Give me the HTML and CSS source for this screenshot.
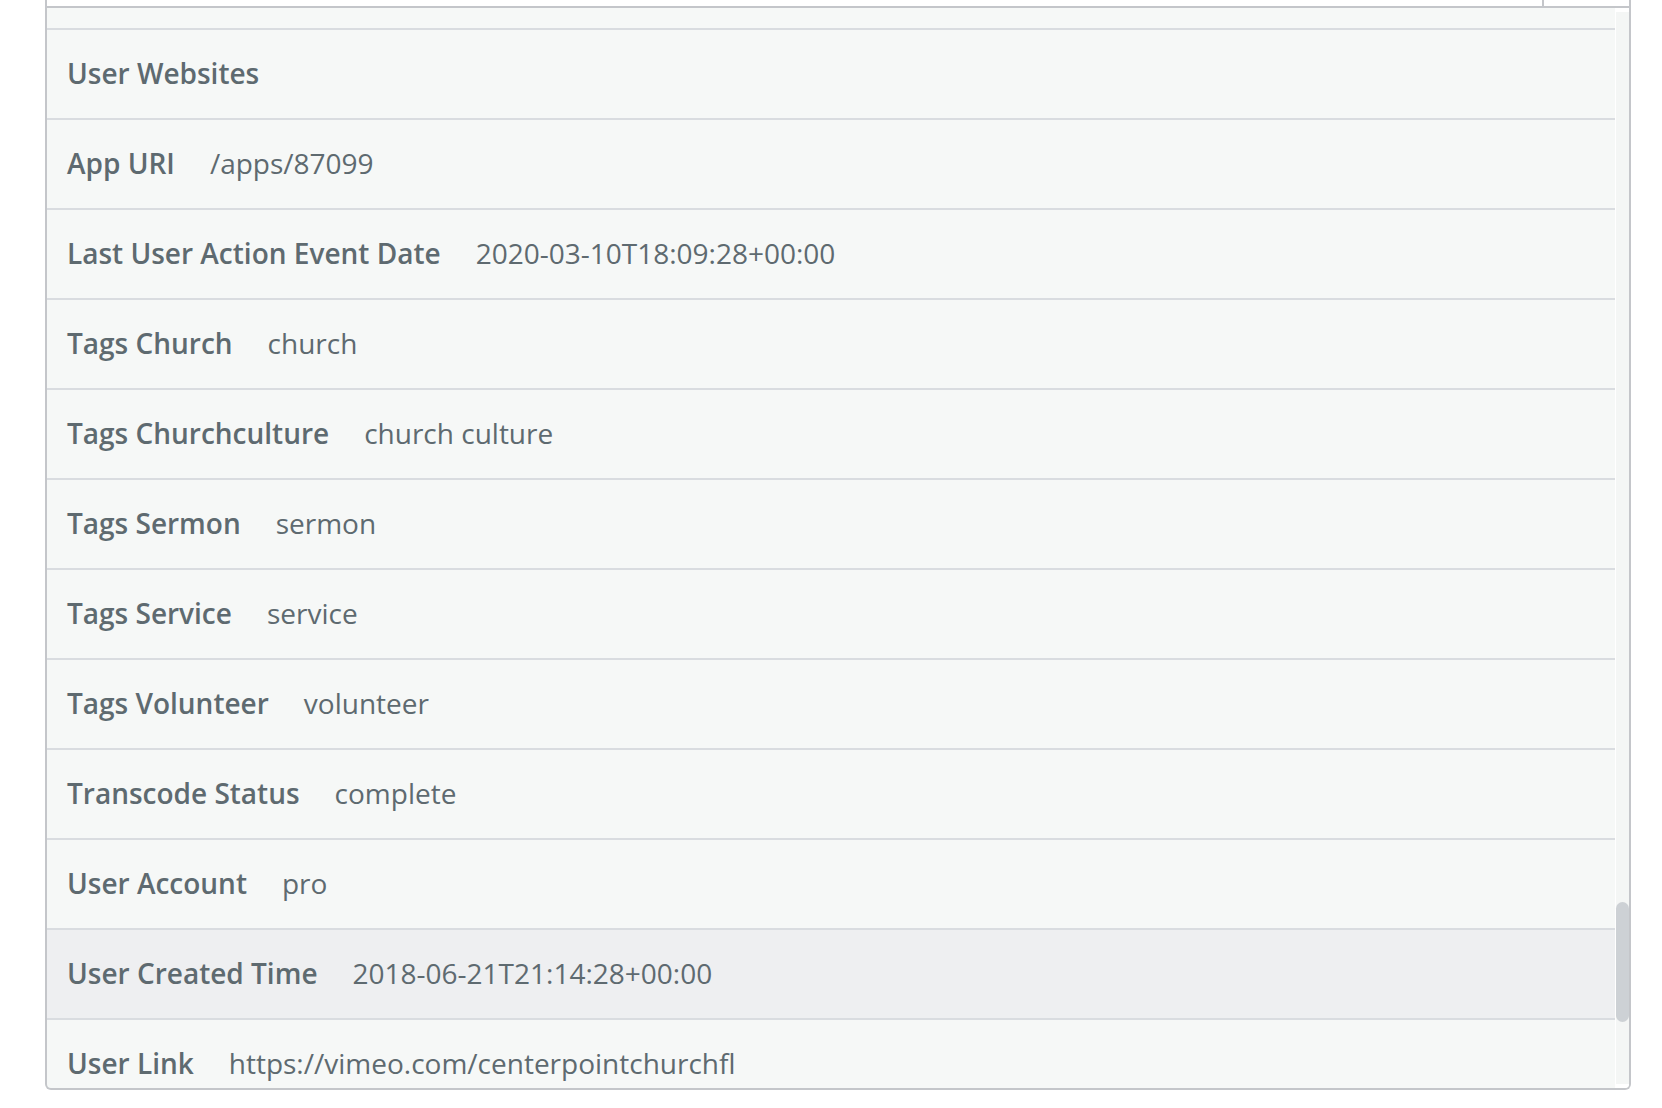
FILE: index.html
```html
<!DOCTYPE html>
<html lang="en">
<head>
    <meta charset="UTF-8">
    <title>Fields</title>
    <link rel="stylesheet" href="styles.css">
</head>
<body>
    <div class="panel">
        <div class="panel-head">
            <div class="head-field"></div>
            <div class="head-btn"></div>
        </div>

        <div class="panel-body">
            <div class="fields">
                <div class="field field-cut"></div>
                <div class="field"><span class="field-label">User Websites</span></div>
                <div class="field"><span class="field-label">App URI</span><span class="field-value">/apps/87099</span></div>
                <div class="field"><span class="field-label">Last User Action Event Date</span><span class="field-value">2020-03-10T18:09:28+00:00</span></div>
                <div class="field"><span class="field-label">Tags Church</span><span class="field-value">church</span></div>
                <div class="field"><span class="field-label">Tags Churchculture</span><span class="field-value">church culture</span></div>
                <div class="field"><span class="field-label">Tags Sermon</span><span class="field-value">sermon</span></div>
                <div class="field"><span class="field-label">Tags Service</span><span class="field-value">service</span></div>
                <div class="field"><span class="field-label">Tags Volunteer</span><span class="field-value">volunteer</span></div>
                <div class="field"><span class="field-label">Transcode Status</span><span class="field-value">complete</span></div>
                <div class="field"><span class="field-label">User Account</span><span class="field-value">pro</span></div>
                <div class="field field-hover"><span class="field-label">User Created Time</span><span class="field-value">2018-06-21T21:14:28+00:00</span></div>
                <div class="field"><span class="field-label">User Link</span><span class="field-value">https://vimeo.com/centerpointchurchfl</span></div>
            </div>

            <!-- fake scrollbar -->
            <div class="scroll-track">
                <div class="scroll-rail">
                    <div class="scroll-thumb"></div>
                </div>
            </div>
        </div>
    </div>
</body>
</html>
```

FILE: styles.css
```css
body {
    margin: 0;
    background-color: #fff;
    font-family: "Open Sans", "Liberation Sans", sans-serif;
}
.panel {
    margin-left: 45px;
    width: 1586px;
}
.panel-head {
    display: flex;
    height: 8px;
    box-sizing: border-box;
    border: 2px solid #c4c6ca;
    border-top: none;
    background-color: #fff;
}
.head-field {
    flex: 1;
    border-right: 2px solid #c4c6ca;
}
.head-btn {
    width: 85px;
}
.panel-body {
    display: flex;
    height: 1082px;
    box-sizing: border-box;
    border: 2px solid #c4c6ca;
    border-top: none;
    border-radius: 0 0 6px 6px;
    overflow: hidden;
    background-color: #f6f8f7;
}
.fields {
    flex: 1;
    overflow: hidden;
}
.field {
    display: flex;
    align-items: center;
    gap: 35px;
    height: 90px;
    box-sizing: border-box;
    padding: 0 0 2px 20px;
    border-bottom: 2px solid #d9dce0;
    font-size: 28px;
    color: #5e6a70;
    white-space: nowrap;
}
.field-cut {
    height: 22px;
}
.field-hover {
    background-color: #eeeff1;
}
.field-label {
    font-weight: 600;
}
.scroll-track {
    width: 14px;
    border-left: 1px solid #fff;
    box-sizing: border-box;
    background-color: #fff;
    display: flex;
}
.scroll-rail {
    flex: 1;
    margin: 4px 0;
    background-color: #f4f6f5;
}
.scroll-thumb {
    margin-top: 890px;
    height: 120px;
    border-radius: 7px;
    background-color: #cdd1d5;
}
```
